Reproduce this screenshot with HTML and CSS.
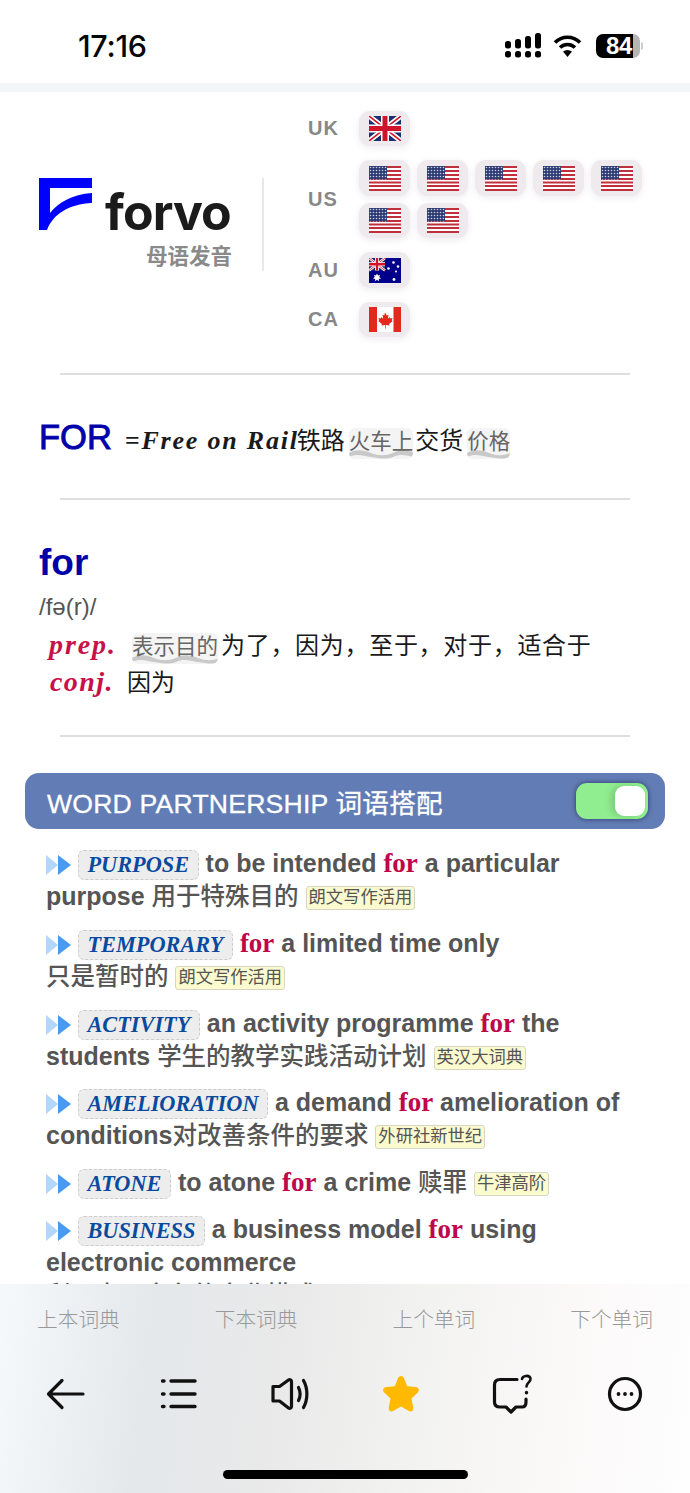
FILE: index.html
```html
<!DOCTYPE html>
<html lang="zh">
<head>
<meta charset="utf-8">
<title>forvo for</title>
<link rel="stylesheet" href="styles.css">
</head>
<body>
<svg class="defs" width="0" height="0" aria-hidden="true">
  <defs>
    <pattern id="stars" width="3" height="3" patternUnits="userSpaceOnUse">
      <rect width="3" height="3" fill="#2b3a72"/><circle cx="1.5" cy="1.5" r=".8" fill="#c9cde0"/>
    </pattern>
    <symbol id="f-us" viewBox="0 0 32 25">
      <rect width="32" height="25" fill="#fff"/>
      <g fill="#bf2f3c">
        <rect y="0" width="32" height="2"/><rect y="4" width="32" height="2"/><rect y="8" width="32" height="2"/><rect y="12" width="32" height="2"/><rect y="15.5" width="32" height="2"/><rect y="19" width="32" height="2"/><rect y="23" width="32" height="2"/>
      </g>
      <rect width="18" height="13.5" fill="url(#stars)"/>
    </symbol>
    <symbol id="f-uk" viewBox="0 0 32 25">
      <rect width="32" height="25" fill="#1c2f6e"/>
      <path d="M0 0 32 25M32 0 0 25" stroke="#fff" stroke-width="5"/>
      <path d="M0 0 32 25M32 0 0 25" stroke="#cf142b" stroke-width="1.6"/>
      <path d="M16 0V25M0 12.500H32" stroke="#fff" stroke-width="8"/>
      <path d="M16 0V25M0 12.500H32" stroke="#cf142b" stroke-width="5"/>
    </symbol>
    <symbol id="f-au" viewBox="0 0 32 25">
      <rect width="32" height="25" fill="#00008b"/>
      <g>
        <rect width="16" height="12.500" fill="#1c2f6e"/>
        <path d="M0 0 16 12.500M16 0 0 12.500" stroke="#fff" stroke-width="2.500"/>
        <path d="M0 0 16 12.500M16 0 0 12.500" stroke="#cf142b" stroke-width=".8"/>
        <path d="M8 0V12.500M0 6.250H16" stroke="#fff" stroke-width="4"/>
        <path d="M8 0V12.500M0 6.250H16" stroke="#cf142b" stroke-width="2.400"/>
      </g>
      <g fill="#fff">
        <path d="M8 15.500l1 2 2.200-.5-1 2 1.800 1.400-2.200.5 0 2.300-1.800-1.400-1.800 1.400 0-2.300-2.200-.5 1.800-1.400-1-2 2.200.5z"/>
        <circle cx="24.500" cy="4.500" r="1.300"/><circle cx="29" cy="8.500" r="1.300"/><circle cx="19.500" cy="10.500" r="1.300"/><circle cx="27" cy="13.500" r="1"/><circle cx="25" cy="21.500" r="1.400"/>
      </g>
    </symbol>
    <symbol id="f-ca" viewBox="0 0 32 25">
      <rect width="32" height="25" fill="#fff"/>
      <rect width="8" height="25" fill="#e1291d"/><rect x="24.500" width="7.500" height="25" fill="#e1291d"/>
      <path d="M16 5.500l1.800 3 1.700-.8-.7 4 2-1.800.5 1.500 2.300-.4-.8 2.400 1 .6-3.700 3 .5 1.500-3.800-.5.100 3.500h-.8l.1-3.500-3.800.5.500-1.500-3.700-3 1-.6-.8-2.400 2.300.4.500-1.500 2 1.800-.7-4 1.700.8z" fill="#e1291d"/>
    </symbol>
    <symbol id="arrows" viewBox="0 0 25 20">
      <path d="M0 0 12 10 0 20Z" fill="#b3d6fb"/>
      <path d="M12 0 25 10 12 20Z" fill="#4a9bef"/>
    </symbol>
  </defs>
</svg>

<div class="phone">
  <header class="status">
    <span class="time">17:16</span>
    <div class="status-icons">
      <svg class="signal" width="36" height="25" viewBox="0 0 36 25" fill="#000">
        <rect x="0" y="18" width="6" height="6.500" rx="2.500"/><rect x="10" y="18" width="6" height="6.500" rx="2.500"/><rect x="20" y="18" width="6" height="6.500" rx="2.500"/><rect x="30" y="18" width="6" height="6.500" rx="2.500"/>
        <rect x="0" y="8" width="6" height="7.500" rx="2.500"/><rect x="10" y="6" width="6" height="9.500" rx="2.500"/><rect x="20" y="3" width="6" height="12.500" rx="2.500"/><rect x="30" y="0" width="6" height="15.500" rx="2.500"/>
      </svg>
      <svg class="wifi" width="29" height="24" viewBox="0 0 29 24" fill="none" stroke="#000" stroke-width="3.600">
        <path d="M2 8.500C9 1.500 20 1.500 27 8.500"/>
        <path d="M7 13.500C11.500 9.500 17.500 9.500 22 13.500"/>
        <path d="M10 17.500 14.500 23 19 17.500C16 15.500 13 15.500 10 17.500Z" fill="#000" stroke="none"/>
      </svg>
      <div class="battery"><span class="battery-fill">84</span><span class="battery-rest"></span><span class="battery-nub"></span></div>
    </div>
  </header>
  <div class="strip"></div>

  <section class="head">
    <div class="logo">
      <div class="logo-main">
        <svg class="logo-f" width="53" height="52" viewBox="0 0 53 52">
          <path d="M0 0H53V10H11V35C19 25 33 16 53 15V25C30 26 14 36 8 52H0Z" fill="#0000ff"/>
        </svg>
        <span class="logo-word">forvo</span>
      </div>
      <div class="logo-sub">母语发音</div>
    </div>
    <div class="langs">
      <div class="lang"><span class="lang-name">UK</span><div class="flags">
        <span class="flag"><svg width="32" height="25"><use href="#f-uk"/></svg></span>
      </div></div>
      <div class="lang"><span class="lang-name">US</span><div class="flags">
        <span class="flag"><svg width="32" height="25"><use href="#f-us"/></svg></span>
        <span class="flag"><svg width="32" height="25"><use href="#f-us"/></svg></span>
        <span class="flag"><svg width="32" height="25"><use href="#f-us"/></svg></span>
        <span class="flag"><svg width="32" height="25"><use href="#f-us"/></svg></span>
        <span class="flag"><svg width="32" height="25"><use href="#f-us"/></svg></span>
        <span class="flag"><svg width="32" height="25"><use href="#f-us"/></svg></span>
        <span class="flag"><svg width="32" height="25"><use href="#f-us"/></svg></span>
      </div></div>
      <div class="lang"><span class="lang-name">AU</span><div class="flags">
        <span class="flag"><svg width="32" height="25"><use href="#f-au"/></svg></span>
      </div></div>
      <div class="lang"><span class="lang-name">CA</span><div class="flags">
        <span class="flag"><svg width="32" height="25"><use href="#f-ca"/></svg></span>
      </div></div>
    </div>
  </section>
  <hr class="rule">

  <section class="abbr">
    <span class="abbr-word">FOR</span>
    <span class="abbr-def"><b class="abbr-en">=Free on Rail</b>铁路<span class="hl">火车上</span>交货<span class="hl hl-b">价格</span></span>
  </section>
  <hr class="rule">

  <section class="entry">
    <div class="entry-word">for</div>
    <div class="entry-ipa">/fə(r)/</div>
    <div class="pos-line"><b class="pos">prep.</b><span class="hl hl-c">表示目的</span><span class="gloss">为了，因为，至于，对于，适合于</span></div>
    <div class="pos-line pos-line-b"><b class="pos">conj.</b><span class="gloss-b">因为</span></div>
  </section>
  <hr class="rule">

  <div class="banner">
    <span class="banner-title">WORD PARTNERSHIP 词语搭配</span>
    <span class="toggle"><span class="knob"></span></span>
  </div>

  <section class="items">
    <p class="item"><svg class="arrow"><use href="#arrows"/></svg><span class="key">PURPOSE</span>to be intended <em>for</em> a particular purpose <span class="zh">用于特殊目的</span> <span class="src">朗文写作活用</span></p>
    <p class="item"><svg class="arrow"><use href="#arrows"/></svg><span class="key">TEMPORARY</span><em>for</em> a limited time only<br><span class="zh">只是暂时的</span> <span class="src">朗文写作活用</span></p>
    <p class="item"><svg class="arrow"><use href="#arrows"/></svg><span class="key">ACTIVITY</span>an activity programme <em>for</em> the students <span class="zh">学生的教学实践活动计划</span> <span class="src">英汉大词典</span></p>
    <p class="item"><svg class="arrow"><use href="#arrows"/></svg><span class="key">AMELIORATION</span>a demand <em>for</em> amelioration of conditions<span class="zh">对改善条件的要求</span> <span class="src">外研社新世纪</span></p>
    <p class="item"><svg class="arrow"><use href="#arrows"/></svg><span class="key">ATONE</span>to atone <em>for</em> a crime <span class="zh">赎罪</span> <span class="src">牛津高阶</span></p>
    <p class="item"><svg class="arrow"><use href="#arrows"/></svg><span class="key">BUSINESS</span>a business model <em>for</em> using electronic commerce<br><span class="zh">利用电子商务的商业模式</span> <span class="src">朗文写作</span></p>
  </section>

  <footer class="bar">
    <nav class="bar-labels"><span>上本词典</span><span>下本词典</span><span>上个单词</span><span>下个单词</span></nav>
    <div class="bar-icons">
      <svg width="44" height="44" viewBox="0 0 44 44" fill="none" stroke="#111" stroke-width="3.200" stroke-linecap="round" stroke-linejoin="round"><path d="M39 22H5M18 8.500 4.500 22 18 35.500"/></svg>
      <svg width="44" height="44" viewBox="0 0 44 44" fill="none" stroke="#111" stroke-width="3.400" stroke-linecap="round"><path d="M6.500 9H8M6.500 22H8M6.500 34.500H8M15 9H39M15 22H39M15 34.500H39"/></svg>
      <svg width="44" height="44" viewBox="0 0 44 44" fill="none" stroke="#111" stroke-width="3.200" stroke-linecap="round" stroke-linejoin="round"><path d="M5 14.500V29H11.500L20.500 36C22 37 23.500 36 23.500 34.500V9.500C23.500 8 22 7 20.500 8L11.500 14.500Z"/><path d="M30.500 15.500C32.500 19.500 32.500 24.500 30.500 28.500"/><path d="M35.500 8.500C40 16.500 40 27.500 35.500 35.500"/></svg>
      <svg width="44" height="44" viewBox="0 0 44 44"><path d="M22 4C23.500 4 24.500 5 25.200 6.800L28.300 14.200 36.500 15C40 15.500 41 18.500 38.500 20.800L32.500 26.500 34.200 35.500C34.800 38.800 32.500 40.500 29.500 38.800L22 34.500 14.500 38.800C11.500 40.500 9.200 38.800 9.800 35.500L11.500 26.500 5.500 20.800C3 18.500 4 15.500 7.500 15L15.700 14.200 18.800 6.800C19.500 5 20.500 4 22 4Z" fill="#ffb900"/></svg>
      <svg width="44" height="44" viewBox="0 0 44 44" fill="none" stroke="#111" stroke-width="3.200" stroke-linecap="round" stroke-linejoin="round"><path d="M26 7.500H9C5.500 7.500 3.500 9.500 3.500 13V30C3.500 33.500 5.500 35 9 35H15L20 40 25 35H31C34 35 35 33 35 30V27"/><path d="M31 7C31.500 3.500 38.500 2.500 39.500 6.500 40 10 35.500 10.500 35.500 14.500" stroke-width="2.600"/><path d="M35.500 20.500v.2" stroke-width="3.400"/></svg>
      <svg width="44" height="44" viewBox="0 0 44 44" fill="none" stroke="#111" stroke-width="3.200"><circle cx="22" cy="22" r="15.500"/><circle cx="15.500" cy="22" r="1.900" fill="#111" stroke="none"/><circle cx="22" cy="22" r="1.900" fill="#111" stroke="none"/><circle cx="28.500" cy="22" r="1.900" fill="#111" stroke="none"/></svg>
    </div>
    <div class="home"></div>
  </footer>
</div>
</body>
</html>
```
FILE: styles.css
```css
* { box-sizing: border-box; }
html, body { margin: 0; padding: 0; background: #fff; }
body { font-family: "Liberation Sans", "Noto Sans CJK SC", sans-serif; }
.defs { position: absolute; }
.phone { position: relative; width: 690px; height: 1493px; overflow: hidden; background: #fff; }

.status { height: 83px; padding: 8px 50px 0 78px; display: flex; align-items: center; justify-content: space-between; }
.time { font-family: Inter, "Liberation Sans", sans-serif; font-weight: 500; font-size: 30.500px; letter-spacing: -.3px; color: #050505; }
.status-icons { display: flex; align-items: center; gap: 12px; }
.wifi { margin-right: 2px; }
.battery { position: relative; display: flex; width: 44px; height: 24px; border-radius: 7px; }
.battery-fill { width: 37px; height: 24px; background: #000; color: #fff; border-radius: 7px 0 0 7px; font: 700 24px/24px "Liberation Sans", sans-serif; text-align: right; padding-right: 1px; letter-spacing: -.4px; }
.battery-rest { width: 7px; height: 24px; background: #b5b5b5; border-radius: 0 7px 7px 0; }
.battery-nub { position: absolute; right: -3px; top: 8px; width: 2px; height: 8px; background: #ccc; border-radius: 0 2px 2px 0; }
.strip { height: 9px; background: #f4f5f7; }

.head { height: 281px; padding-bottom: 17px; display: flex; align-items: center; }
.logo { width: 225px; height: 93px; margin-left: 39px; border-right: 2px solid #e8e8e8; padding-right: 30px; }
.logo-main { display: flex; align-items: flex-start; }
.logo-word { font-family: Inter, "Liberation Sans", sans-serif; font-weight: 700; font-size: 50px; line-height: 58px; letter-spacing: -.9px; color: #1b1b1b; margin: 5px 0 0 13px; }
.logo-sub { margin-top: 1px; text-align: right; font-size: 21.500px; line-height: 30px; font-weight: 700; color: #8a8a8a; white-space: nowrap; }
.langs { margin-left: 44px; display: flex; flex-direction: column; gap: 14px; }
.lang { display: flex; align-items: center; }
.lang-name { width: 51px; padding-right: 22px; text-align: center; font-size: 20px; font-weight: 700; letter-spacing: 1px; color: #888; }
.flags { display: flex; flex-wrap: wrap; gap: 7px; width: 290px; }
.flag { width: 51px; height: 35.500px; display: flex; align-items: center; justify-content: center; border-radius: 11px; background: #efeaee; box-shadow: 0 2px 6px rgba(120, 100, 120, .12); }

.rule { height: 2px; margin: 0 60px; border: 0; background: #dedede; }

.abbr { height: 123px; padding-left: 39px; display: flex; align-items: baseline; padding-top: 40px; }
.abbr-word { font-size: 34.500px; line-height: 44px; color: #0000aa; -webkit-text-stroke: .9px #0000aa; margin-right: 14px; }
.abbr-def { font-size: 24px; line-height: 36px; color: #1a1a1a; font-weight: 400; white-space: nowrap; }
.abbr-en { font-family: "Liberation Serif", serif; font-style: italic; font-weight: 700; font-size: 26px; letter-spacing: 1.800px; margin-left: -1px; margin-right: -2px; }
.hl { display: inline-block; height: 31px; line-height: 28px; margin: 0 2px 0 4px; padding: 0; font-size: 21.500px; color: #666; border-radius: 6px; background: #f4f4f4 url("data:image/svg+xml,%3Csvg xmlns='http://www.w3.org/2000/svg' width='44' height='9'%3E%3Cpath d='M0 3C8 -1 14 0 22 3S36 6 44 3V7C36 10 30 8 22 7S8 3 0 7Z' fill='%23c9c9c9'/%3E%3C/svg%3E") repeat-x 0 100%; }
.hl-b { margin-left: 4px; }
.hl-c { margin: 0 3px 0 0; }

.entry { height: 235px; padding: 37px 0 0 39px; }
.entry-word { font-size: 37px; font-weight: 700; line-height: 52px; color: #0000aa; }
.entry-ipa { font-family: "Liberation Sans", "DejaVu Sans", sans-serif; font-size: 24px; line-height: 30px; color: #555; margin-top: 3px; }
.pos-line { display: flex; align-items: baseline; margin: 5px 0 0 10px; font-size: 24px; line-height: 35px; font-weight: 400; color: #1a1a1a; }
.pos-line-b { margin-top: 0; }
.pos { font-family: "Liberation Serif", serif; font-style: italic; font-weight: 700; font-size: 28px; letter-spacing: 1.900px; color: #c8104a; width: 83px; flex: none; }
.pos-line-b .pos { width: 78px; letter-spacing: 1.400px; padding-left: 1px; }
.gloss { letter-spacing: .7px; white-space: nowrap; }

.banner { height: 56px; margin: 36px 25px 0; padding: 0 17px 0 22px; display: flex; align-items: center; justify-content: space-between; border-radius: 14px; background: #627cb5; }
.banner-title { font-size: 26.600px; letter-spacing: .2px; color: #fff; -webkit-text-stroke: .3px #fff; white-space: nowrap; }
.toggle { display: flex; justify-content: flex-end; width: 72px; height: 36px; padding: 3px; border-radius: 11px; background: #90ee90; box-shadow: 0 0 5px rgba(20, 30, 70, .7); }
.knob { width: 30px; height: 30px; border-radius: 9px; background: #fff; box-shadow: -4px 0 6px rgba(70, 130, 70, .3); }

.items { padding: 18px 40px 0 46px; }
.item { margin: 0 0 13.750px; font-size: 25px; line-height: 33px; font-weight: 700; color: #555; }
.item em { font-family: "Liberation Serif", serif; font-style: normal; font-size: 27px; color: #c0064a; }
.zh { font-size: 24.500px; font-weight: 500; }
.arrow { width: 25px; height: 20px; vertical-align: -3px; margin-right: 7px; }
.key { display: inline-block; height: 30px; line-height: 27px; margin-right: 7px; padding: 0 8.500px; border: 1px dashed #ccc; border-radius: 6px; background: #ededed; font-family: "Liberation Serif", serif; font-style: italic; font-weight: 700; font-size: 22.300px; color: #0a4a9e; }
.src { display: inline-block; height: 24px; line-height: 21px; padding: 0 2px; vertical-align: 2px; border: 1px solid #d6d6c4; border-radius: 3px; background: #fbfbcf; font-size: 17.300px; font-weight: 400; color: #555; }

.bar { position: absolute; left: 0; right: 0; bottom: 0; height: 209px; padding-top: 22px; background: linear-gradient(97deg, #f6f9fc 0, #e4e8eb 22%, #e9e9e9 40%, #f3f3f2 62%, #fbf8f8 80%, #fefefe 100%); }
.bar-labels { display: flex; justify-content: space-between; padding: 0 37px; font-size: 20.700px; line-height: 28px; font-weight: 300; color: #999; }
.bar-icons { display: flex; justify-content: space-between; margin-top: 38px; padding: 0 43px 0 44px; }
.home { width: 245px; height: 9px; margin: 54px auto 0; border-radius: 5px; background: #000; }
```
